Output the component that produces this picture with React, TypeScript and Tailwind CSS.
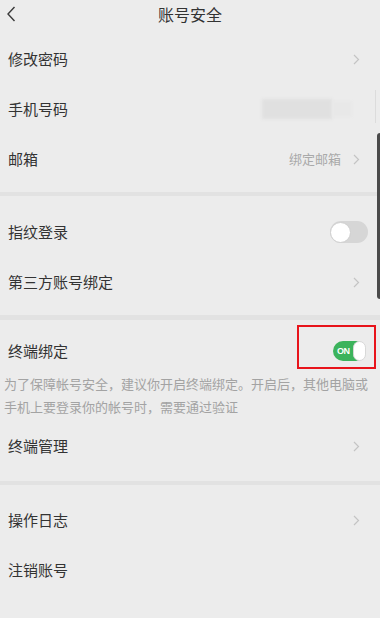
import React from 'react';

const font = { fontFamily: '"Noto Sans CJK SC", "Noto Sans", sans-serif' };

function Chevron() {
  return (
    <svg width="7" height="11" viewBox="0 0 7 11" className="ml-3">
      <path d="M1 1 L5.5 5.5 L1 10" fill="none" stroke="#c4c4c4" strokeWidth="1.2" />
    </svg>
  );
}

function Row({ label, right, arrow = true, className = 'h-[50px]' }: { label: string; right?: React.ReactNode; arrow?: boolean; className?: string }) {
  return (
    <div className={`flex items-center justify-between pl-2 pr-5 ${className}`}>
      <span className="text-[15px] text-[#333333]">{label}</span>
      <div className="flex items-center">
        {right}
        {arrow && <Chevron />}
      </div>
    </div>
  );
}

function Divider({ h }: { h: string }) {
  return <div className={`${h} bg-[#e2e2e2]`} />;
}

function ToggleOff() {
  return (
    <div className="mr-[-8px] flex h-[22px] w-[38px] items-center rounded-full bg-[#d6d6d6]">
      <div className="h-[21px] w-[21px] rounded-full border border-[#cfcfcf] bg-white" />
    </div>
  );
}

function ToggleOn() {
  return (
    <div className="relative mr-[-6px]">
      <div className="flex h-[20px] w-[33px] items-center justify-between rounded-full bg-[#3cb35c] pl-[4px]">
        <span className="text-[9px] font-bold leading-none tracking-[-0.5px] text-white" style={{ fontFamily: '"Liberation Sans", sans-serif' }}>
          ON
        </span>
        <div className="h-[20px] w-[13px] rounded-full border border-[#d8d8d8] bg-white" />
      </div>
      <div className="absolute left-[-36px] top-[-16px] h-[44px] w-[79px] border-2 border-[#e8141b]" />
    </div>
  );
}

export default function App() {
  return (
    <div className="relative h-[618px] w-[380px] overflow-hidden bg-[#ececec]" style={font}>
      {/* header */}
      <div className="relative flex h-[28px] items-center justify-center">
        <svg width="10" height="16" viewBox="0 0 10 16" className="absolute left-[6px] top-[6px]">
          <path d="M8.5 1 L2 8 L8.5 15" fill="none" stroke="#3a3a3a" strokeWidth="1.4" />
        </svg>
        <span className="text-[16px] text-[#333333]">账号安全</span>
      </div>

      <div className="pb-[8px] pt-[6px]">
        <Row label="修改密码" />
        <Row
          label="手机号码"
          arrow={false}
          right={
            <div className="mr-[8px] flex items-center">
              <div className="h-[20px] w-[70px] bg-[#e0e0e0] blur-[1.5px]" />
              <div className="h-[16px] w-[20px] bg-[#e8e8e8] blur-[1px]" />
            </div>
          }
        />
        <Row label="邮箱" right={<span className="text-[13px] text-[#a9a9a9]">绑定邮箱</span>} />
      </div>
      <Divider h="h-[4px]" />

      <div className="pb-[8px] pt-[11px]">
        <Row label="指纹登录" arrow={false} right={<ToggleOff />} />
        <Row label="第三方账号绑定" />
      </div>
      <Divider h="h-[5px]" />

      <div className="pb-[10px] pt-[10px]">
        <Row label="终端绑定" arrow={false} right={<ToggleOn />} className="h-[42px]" />
        <p className="px-[4px] text-[13px] leading-[23px] text-[#a3a3a3]">
          为了保障帐号安全，建议你开启终端绑定。开启后，其他电脑或手机上要登录你的帐号时，需要通过验证
        </p>
        <div className="h-[3px]" />
        <Row label="终端管理" />
      </div>
      <Divider h="h-[4px]" />

      <div className="pt-[10px]">
        <Row label="操作日志" />
        <Row label="注销账号" arrow={false} />
      </div>

      {/* scroll indicator */}
      <div className="absolute right-0 top-[133px] h-[166px] w-[3px] rounded-l bg-[#4a4a4a]" />
      <div className="absolute right-[4px] top-[90px] h-[33px] w-px bg-[#dcdcdc]" />
    </div>
  );
}
